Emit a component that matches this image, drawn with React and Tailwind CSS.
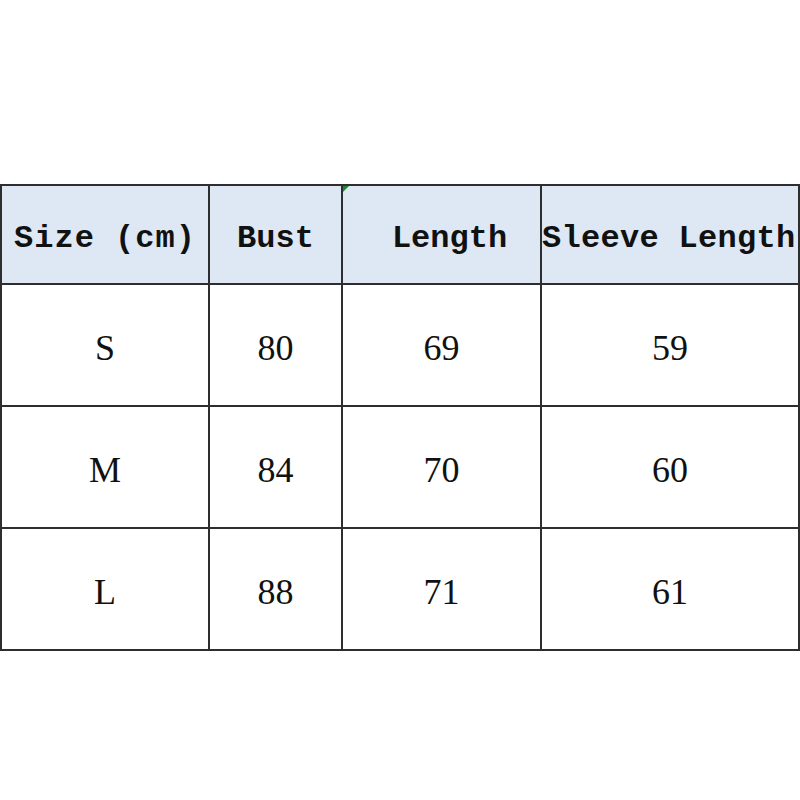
import React from 'react';

const rows = [
    ['S', '80', '69', '59'],
    ['M', '84', '70', '60'],
    ['L', '88', '71', '61'],
];

export default function App() {
    return (
        <div className="w-[800px] h-[800px] bg-white pt-[184px]">
            <table className="table-fixed border-collapse w-[798px]">
                <colgroup>
                    <col className="w-[208px]" />
                    <col className="w-[133px]" />
                    <col className="w-[199px]" />
                    <col className="w-[258px]" />
                </colgroup>
                <thead>
                    <tr className="h-[99px] bg-[#dde8f4]">
                        <th className="border-2 border-[#2e2e2e] p-0 pt-[8px] text-center font-bold text-[32px] text-[#111] font-['Liberation_Mono',monospace] whitespace-nowrap tracking-[1px]">Size (cm)</th>
                        <th className="border-2 border-[#2e2e2e] p-0 pt-[8px] text-center font-bold text-[32px] text-[#111] font-['Liberation_Mono',monospace]">Bust</th>
                        <th className="relative border-2 border-[#2e2e2e] p-0 pt-[8px] pl-[16px] text-center font-bold text-[32px] text-[#111] font-['Liberation_Mono',monospace]">
                            <svg className="absolute left-0 top-0" width="6" height="6" viewBox="0 0 6 6">
                                <polygon points="0,0 6,0 0,6" fill="#1e8a2e" />
                            </svg>
                            Length
                        </th>
                        <th className="border-2 border-[#2e2e2e] p-0 pt-[8px] text-left font-bold text-[32px] text-[#111] font-['Liberation_Mono',monospace] whitespace-nowrap tracking-[0.3px]">Sleeve Length</th>
                    </tr>
                </thead>
                <tbody>
                    {rows.map((row, i) => (
                        <tr key={i} className="h-[122px]">
                            {row.map((cell, j) => (
                                <td key={j} className="border-2 border-[#2e2e2e] p-0 pt-[5px] text-center text-[36px] text-[#111] font-['Liberation_Serif',serif]">
                                    {cell}
                                </td>
                            ))}
                        </tr>
                    ))}
                </tbody>
            </table>
        </div>
    );
}
